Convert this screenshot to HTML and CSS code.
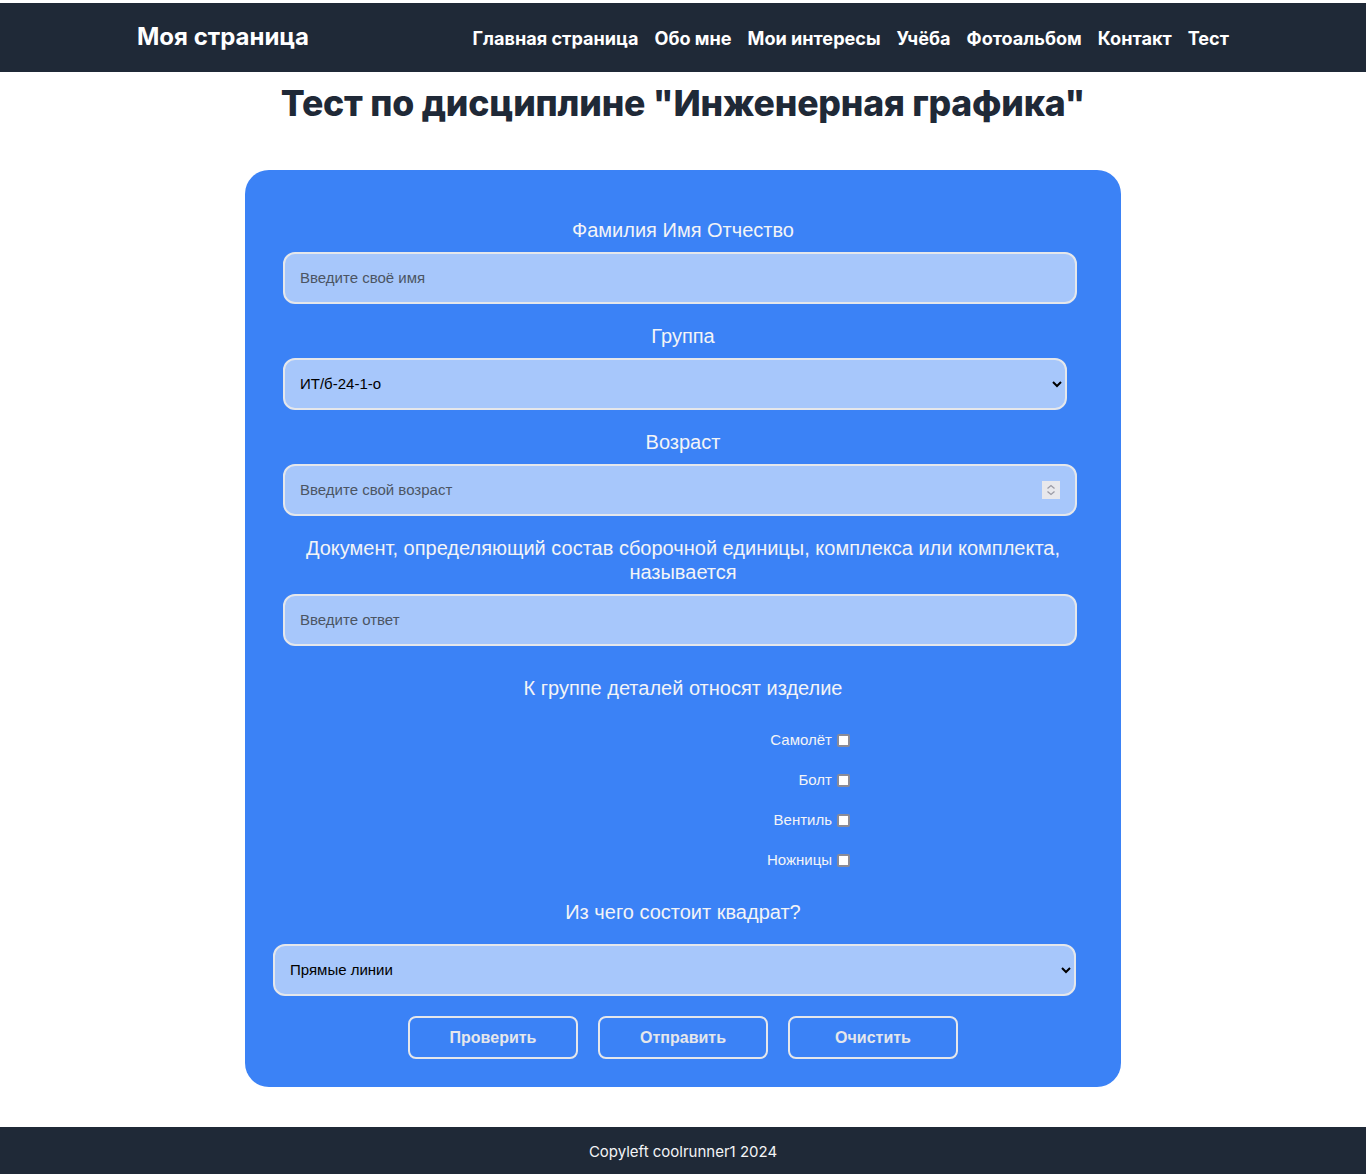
FILE: index.html
```html
<!DOCTYPE html>
<html lang="ru">
<head>
<meta charset="utf-8">
<title>Тест</title>
<link rel="stylesheet" href="styles.css">
</head>
<body>
<header class="nav">
  <div class="nav-inner">
    <a class="brand" href="#">Моя страница</a>
    <nav class="links">
      <a href="#">Главная страница</a>
      <a href="#">Обо мне</a>
      <a href="#">Мои интересы</a>
      <a href="#">Учёба</a>
      <a href="#">Фотоальбом</a>
      <a href="#">Контакт</a>
      <a href="#">Тест</a>
    </nav>
  </div>
</header>
<main class="main">
  <h1 class="title">Тест по дисциплине "Инженерная графика"</h1>
  <form class="card">
    <label class="lbl first">Фамилия Имя Отчество</label>
    <input class="field" type="text" placeholder="Введите своё имя">

    <label class="lbl">Группа</label>
    <select class="field sel sel-group">
      <option>ИТ/б-24-1-о</option>
    </select>

    <label class="lbl">Возраст</label>
    <div class="num-wrap">
      <input class="field num" type="number" placeholder="Введите свой возраст">
      <span class="spinner" aria-hidden="true">
        <svg width="18" height="18" viewBox="0 0 18 18">
          <path d="M5.5 7.5 L9 4.5 L12.5 7.5" fill="none" stroke="#9b9ba6" stroke-width="1.3"/>
          <path d="M5.5 10.5 L9 13.5 L12.5 10.5" fill="none" stroke="#9b9ba6" stroke-width="1.3"/>
        </svg>
      </span>
    </div>

    <label class="lbl">Документ, определяющий состав сборочной единицы, комплекса или комплекта, называется</label>
    <input class="field" type="text" placeholder="Введите ответ">

    <label class="lbl q5">К группе деталей относят изделие</label>
    <div class="checks">
      <label class="chk">Самолёт <input type="checkbox"></label>
      <label class="chk">Болт <input type="checkbox"></label>
      <label class="chk">Вентиль <input type="checkbox"></label>
      <label class="chk">Ножницы <input type="checkbox"></label>
    </div>

    <label class="lbl q6">Из чего состоит квадрат?</label>
    <select class="field sel sel-square">
      <option>Прямые линии</option>
    </select>

    <div class="buttons">
      <button type="button" class="btn">Проверить</button>
      <button type="button" class="btn">Отправить</button>
      <button type="reset" class="btn">Очистить</button>
    </div>
  </form>
</main>
<footer class="footer">Copyleft coolrunner1 2024</footer>
</body>
</html>
```

FILE: styles.css
```css
* { box-sizing: border-box; }

html, body {
  margin: 0;
  padding: 0;
}

body {
  padding-top: 3px;
  background: #ffffff;
  font-family: Inter, "Noto Sans", sans-serif;
}

.nav {
  background: #1f2937;
  height: 69px;
}

.nav-inner {
  width: 1092px;
  height: 100%;
  margin: 0 auto;
  display: flex;
  align-items: center;
  justify-content: space-between;
}

.brand {
  color: #ffffff;
  text-decoration: none;
  font-weight: 700;
  font-size: 24px;
  margin-top: -3px;
}

.links {
  display: flex;
  gap: 16px;
  margin-top: 0;
}

.links a {
  color: #ffffff;
  text-decoration: none;
  font-weight: 700;
  font-size: 18.1px;
}

.main {
  display: flex;
  flex-direction: column;
  align-items: center;
}

.title {
  margin: 12px 0 46px;
  font-size: 35.6px;
  line-height: 40px;
  font-weight: 800;
  color: #1f2937;
  letter-spacing: -0.2px;
}

.card {
  width: 876px;
  background: #3b82f6;
  border-radius: 24px;
  padding: 48px 38px 28px;
  display: flex;
  flex-direction: column;
  font-family: "Liberation Sans", Arial, sans-serif;
}

.lbl {
  display: block;
  text-align: center;
  color: #f3f4f6;
  font-size: 20px;
  line-height: 24px;
  margin: 20px 0 10px;
  padding: 0 8px;
}

.lbl.first { margin-top: 0; }
.lbl.q5 { margin-top: 30px; margin-bottom: 31px; }
.lbl.q6 { margin-top: 31px; margin-bottom: 20px; }

.field {
  display: block;
  align-self: flex-start;
  width: 794px;
  height: 52px;
  border: 2px solid #e5e7eb;
  border-radius: 12px;
  background: #a7c7fb;
  padding: 0 15px 1px;
  font-family: "Liberation Sans", Arial, sans-serif;
  font-size: 15px;
  color: #000000;
}

.field::placeholder {
  color: #4b5563;
}

.sel { padding-left: 11px; }

.sel-group { width: 784px; }

.sel-square {
  width: 803px;
  margin-left: -10px;
}

.num-wrap {
  position: relative;
  align-self: flex-start;
}

.num::-webkit-inner-spin-button,
.num::-webkit-outer-spin-button {
  -webkit-appearance: none;
  margin: 0;
}

.spinner {
  position: absolute;
  left: 759px;
  top: 17px;
  width: 18px;
  height: 18px;
  background: #e8e8ec;
  display: block;
}

.spinner svg { display: block; }

.checks {
  display: flex;
  flex-direction: column;
  align-items: flex-end;
  gap: 22px;
  padding-right: 233px;
}

.chk {
  color: #f3f4f6;
  font-size: 15px;
  line-height: 18px;
  display: flex;
  align-items: center;
}

.chk input {
  -webkit-appearance: none;
  appearance: none;
  margin: 1px 0 0 5px;
  width: 13px;
  height: 13px;
  border: 2px solid #8b8b96;
  border-radius: 2px;
  background: #ffffff;
}

.buttons {
  display: flex;
  justify-content: center;
  gap: 20px;
  margin-top: 20px;
}

.btn {
  width: 170px;
  height: 43px;
  background: transparent;
  border: 2px solid #e5e7eb;
  border-radius: 8px;
  color: #e5e7eb;
  font-family: "Liberation Sans", Arial, sans-serif;
  font-weight: 700;
  font-size: 16px;
  cursor: pointer;
}

.footer {
  margin-top: 40px;
  background: #1f2937;
  color: #f3f4f6;
  text-align: center;
  font-size: 15px;
  height: 47px;
  padding-top: 16px;
  line-height: 18px;
}
```
